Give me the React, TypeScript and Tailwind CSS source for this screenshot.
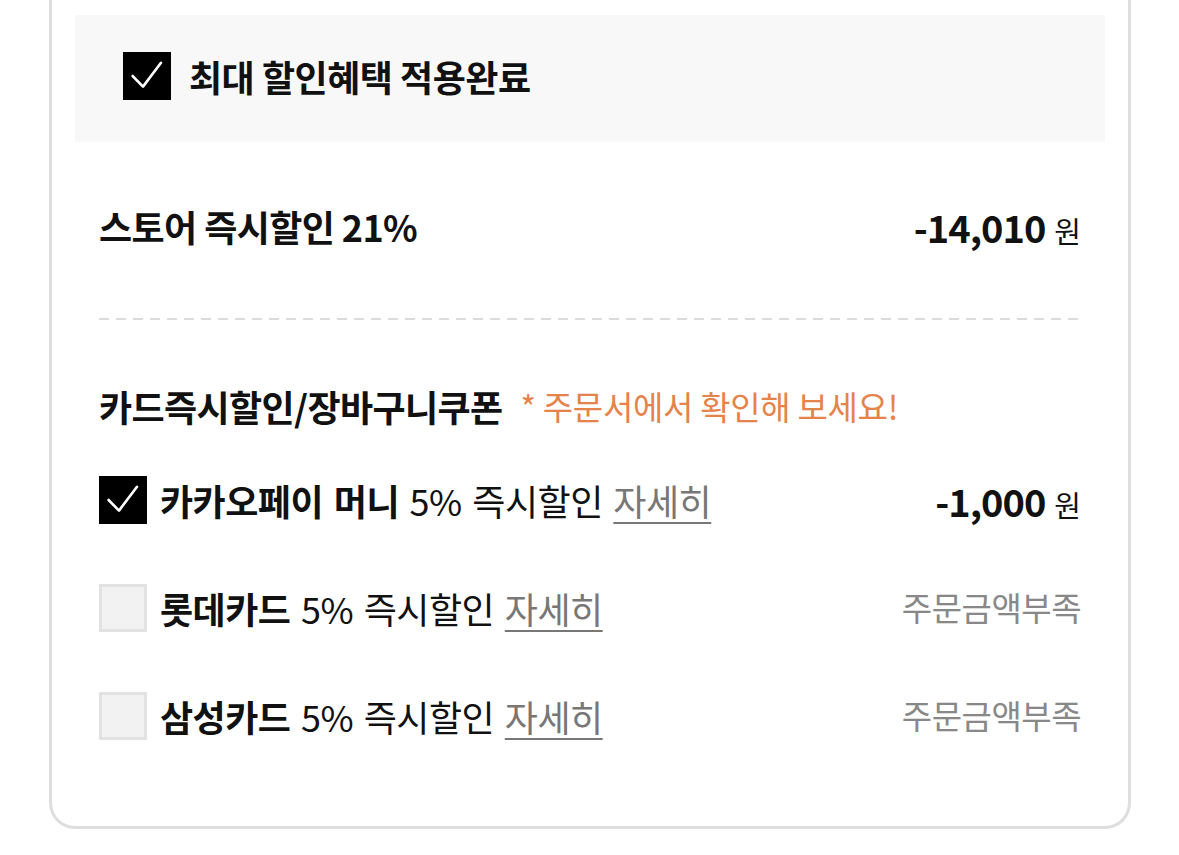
import React from "react";

const font = { fontFamily: '"Noto Sans CJK KR", "Noto Sans", sans-serif' };

const CheckBox = ({ checked }: { checked: boolean }) =>
	checked ? (
		<span className="flex h-[48px] w-[48px] shrink-0 items-center justify-center bg-black">
			<svg
				viewBox="0 0 24 24"
				className="h-[48px] w-[48px]"
				fill="none"
				stroke="white"
				strokeWidth={1.3}
				strokeLinecap="round"
				strokeLinejoin="round">
				<polyline points="4.8,12 10,17.3 19,5.4" />
			</svg>
		</span>
	) : (
		<span className="h-[48px] w-[48px] shrink-0 border-[3px] border-[#e2e2e2] bg-[#f2f2f2]" />
	);

const cards = [
	{ name: "카카오페이 머니", checked: true, amount: "-1,000" },
	{ name: "롯데카드", checked: false, amount: "" },
	{ name: "삼성카드", checked: false, amount: "" },
];

export default function App() {
	return (
		<div className="min-h-[855px] bg-white" style={font}>
			<div className="ml-[49px] w-[1082px] rounded-b-[26px] border-x-[3px] border-b-[3px] border-[#dedede] px-[23px] pt-[15px] pb-[86px]">
				<div className="flex h-[127px] items-center gap-[18px] bg-[#f8f8f8] pb-[6px] pl-[48px]">
					<CheckBox checked={true} />
					<span className="text-[36px] leading-[48px] font-bold tracking-[-0.5px] text-[#111]">
						최대 할인혜택 적용완료
					</span>
				</div>

				<div className="px-[24px]">
					<div className="flex h-[176px] items-center justify-between pb-[8px]">
						<span className="text-[36px] font-bold tracking-[-0.6px] text-[#111]">
							스토어 즉시할인 21%
						</span>
						<span className="flex items-baseline gap-[9px]">
							<span className="text-[38px] font-bold tracking-[-1px] text-[#111]">
								-14,010
							</span>
							<span className="text-[29px] text-[#111]">원</span>
						</span>
					</div>

					<div className="h-[2px] bg-[repeating-linear-gradient(to_right,#dcdcdc_0,#dcdcdc_10px,transparent_10px,transparent_17px)]" />

					<div className="flex items-center gap-[18px] pt-[64px] leading-[44px]">
						<span className="text-[36px] font-bold tracking-[-0.6px] text-[#111]">
							카드즉시할인/장바구니쿠폰
						</span>
						<span className="text-[33px] tracking-[-0.3px] text-[#e5834a]">
							* 주문서에서 확인해 보세요!
						</span>
					</div>

					<div className="mt-[48px] flex flex-col gap-[60px]">
						{cards.map((c) => (
							<div key={c.name} className="flex h-[48px] items-center justify-between">
								<div className="flex items-center gap-[13px]">
									<CheckBox checked={c.checked} />
									<span className="text-[36px] tracking-[-0.5px] text-[#111] [word-spacing:3px]">
										<span className="font-bold">{c.name}</span> 5% 즉시할인{" "}
										<span className="text-[#777] underline decoration-[2px] underline-offset-[6px]">
											자세히
										</span>
									</span>
								</div>
								{c.amount ? (
									<span className="flex items-baseline gap-[9px]">
										<span className="text-[38px] font-bold tracking-[-1px] text-[#111]">
											{c.amount}
										</span>
										<span className="text-[29px] text-[#111]">원</span>
									</span>
								) : (
									<span className="text-[33px] tracking-[-0.5px] text-[#888]">
										주문금액부족
									</span>
								)}
							</div>
						))}
					</div>
				</div>
			</div>
		</div>
	);
}
